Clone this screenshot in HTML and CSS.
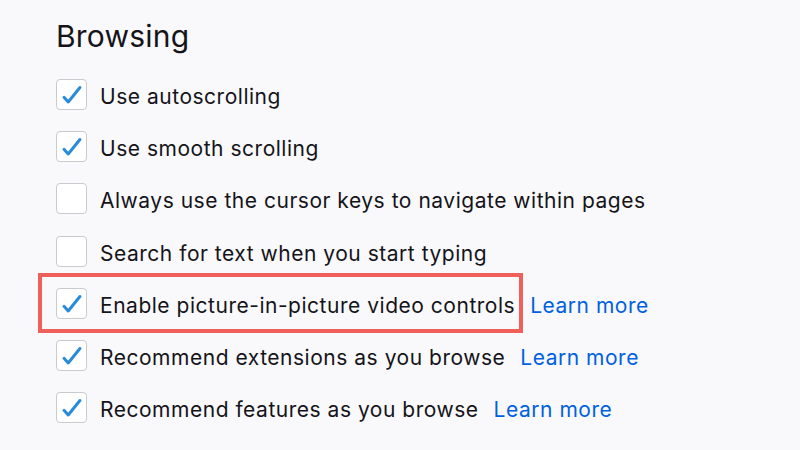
FILE: index.html
```html
<!DOCTYPE html>
<html lang="en">
<head>
<meta charset="utf-8">
<title>Browsing</title>
<link rel="stylesheet" href="styles.css">
</head>
<body>
<section class="group">
  <h1 class="title">Browsing</h1>
  <ul class="options">
    <li class="row">
      <span class="item">
        <span class="box checked"><svg viewBox="0 0 31 31"><path d="M7.5 18.5 L12 23.5 L24.5 8"/></svg></span>
        <span class="label">Use autoscrolling</span>
      </span>
    </li>
    <li class="row">
      <span class="item">
        <span class="box checked"><svg viewBox="0 0 31 31"><path d="M7.5 18.5 L12 23.5 L24.5 8"/></svg></span>
        <span class="label">Use smooth scrolling</span>
      </span>
    </li>
    <li class="row">
      <span class="item">
        <span class="box"></span>
        <span class="label">Always use the cursor keys to navigate within pages</span>
      </span>
    </li>
    <li class="row">
      <span class="item">
        <span class="box"></span>
        <span class="label">Search for text when you start typing</span>
      </span>
    </li>
    <li class="row">
      <span class="item highlight">
        <span class="box checked"><svg viewBox="0 0 31 31"><path d="M7.5 18.5 L12 23.5 L24.5 8"/></svg></span>
        <span class="label">Enable picture-in-picture video controls</span>
      </span>
      <a class="link" href="#">Learn more</a>
    </li>
    <li class="row">
      <span class="item">
        <span class="box checked"><svg viewBox="0 0 31 31"><path d="M7.5 18.5 L12 23.5 L24.5 8"/></svg></span>
        <span class="label">Recommend extensions as you browse</span>
      </span>
      <a class="link" href="#">Learn more</a>
    </li>
    <li class="row">
      <span class="item">
        <span class="box checked"><svg viewBox="0 0 31 31"><path d="M7.5 18.5 L12 23.5 L24.5 8"/></svg></span>
        <span class="label">Recommend features as you browse</span>
      </span>
      <a class="link" href="#">Learn more</a>
    </li>
  </ul>
</section>
</body>
</html>
```

FILE: styles.css
```css
html, body {
  margin: 0;
  padding: 0;
  background: #f9f9fb;
}

body {
  width: 800px;
  height: 450px;
  overflow: hidden;
  font-family: Inter, "Liberation Sans", sans-serif;
  color: #15141a;
}

.group {
  padding: 14px 0 0 56px;
}

.title {
  margin: 0;
  font-size: 30px;
  font-weight: 400;
  line-height: 44px;
  letter-spacing: 0.2px;
}

.options {
  list-style: none;
  margin: 10px 0 0 0;
  padding: 0;
}

.row {
  display: flex;
  align-items: center;
  height: 52.3px;
  font-size: 21px;
  letter-spacing: 0.52px;
}

.item {
  display: flex;
  align-items: center;
  gap: 13px;
  position: relative;
}

.box {
  width: 29px;
  height: 29px;
  border: 1px solid #c9c9cf;
  border-radius: 4px;
  background: #ffffff;
  flex: none;
}

.box svg {
  display: block;
  width: 29px;
  height: 29px;
}

.box svg path {
  fill: none;
  stroke: #2a8bd8;
  stroke-width: 3.2;
  stroke-linecap: round;
  stroke-linejoin: round;
}

.label {
  white-space: nowrap;
  margin-top: 4px;
}

.highlight::after {
  content: "";
  position: absolute;
  left: -18px;
  right: -8px;
  top: -15px;
  bottom: -14px;
  border: 4px solid #f0605a;
}

.link {
  margin-left: 15px;
  margin-top: 4px;
  color: #0061e0;
  text-decoration: none;
  white-space: nowrap;
}
```
